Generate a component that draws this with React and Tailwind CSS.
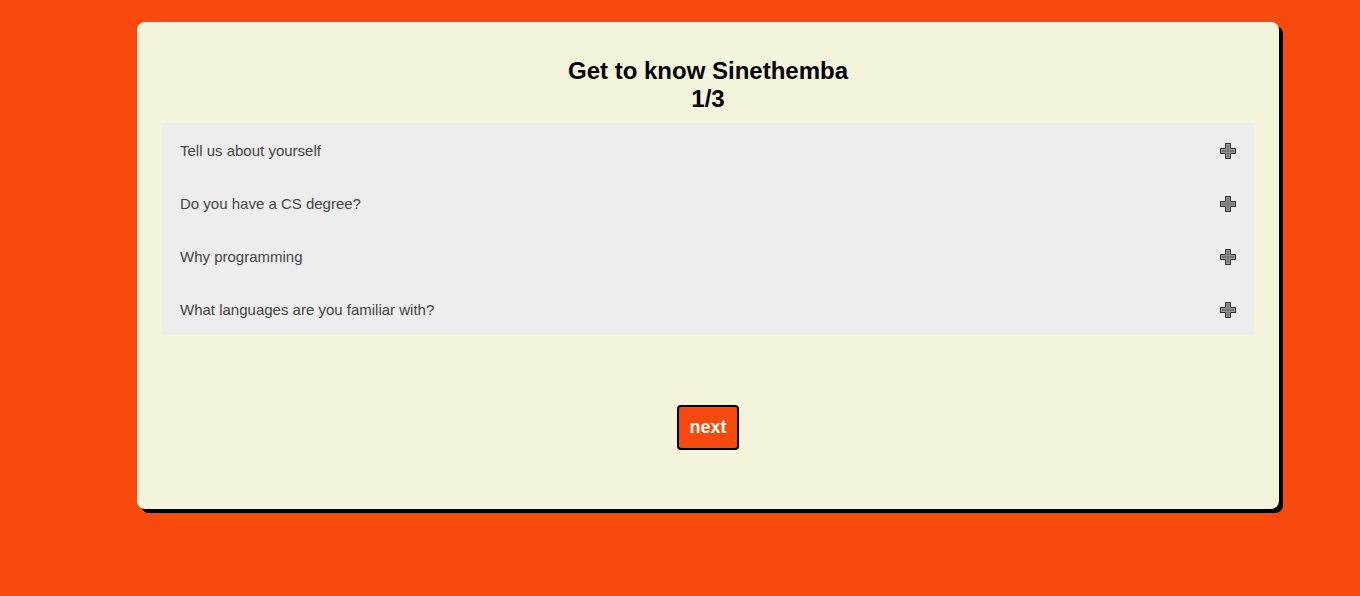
const questions = [
  'Tell us about yourself',
  'Do you have a CS degree?',
  'Why programming',
  'What languages are you familiar with?',
];

function PlusIcon() {
  return (
    <svg width="16" height="16" viewBox="0 0 16 16" className="shrink-0">
      <path
        d="M5.5 0.5h5v5h5v5h-5v5h-5v-5h-5v-5h5z"
        fill="#9a9a9a"
        stroke="#2a2a2a"
        strokeWidth="1"
      />
      <path d="M7 2v5H2v2h5v5h2V9h5V7H9V2z" fill="#777" />
    </svg>
  );
}

export default function App() {
  return (
    <div
      className="min-h-[596px] bg-[#f8490f] pt-[22px]"
      style={{ fontFamily: '"Liberation Sans", Arial, sans-serif' }}
    >
      <div className="ml-[137px] w-[1142px] rounded-lg bg-[#f4f4dc] shadow-[4px_4px_0_#000] px-[25px] pt-[35px] pb-[59px]">
        <h2 className="text-center text-[24px] font-bold leading-[28px] text-black">
          Get to know Sinethemba
          <br />
          1/3
        </h2>
        <div className="mt-[10px] bg-[#ededed]">
          {questions.map((q) => (
            <div key={q} className="flex h-[53px] items-center justify-between pl-[18px] pr-[18px] pt-[3px]">
              <span className="text-[15px] text-[#444]">{q}</span>
              <PlusIcon />
            </div>
          ))}
        </div>
        <div className="mt-[70px] flex justify-center">
          <button className="h-[45px] w-[62px] rounded-[4px] border-2 border-black bg-[#f8490f] text-[18px] font-bold text-[#fffaf0]">
            next
          </button>
        </div>
      </div>
    </div>
  );
}
